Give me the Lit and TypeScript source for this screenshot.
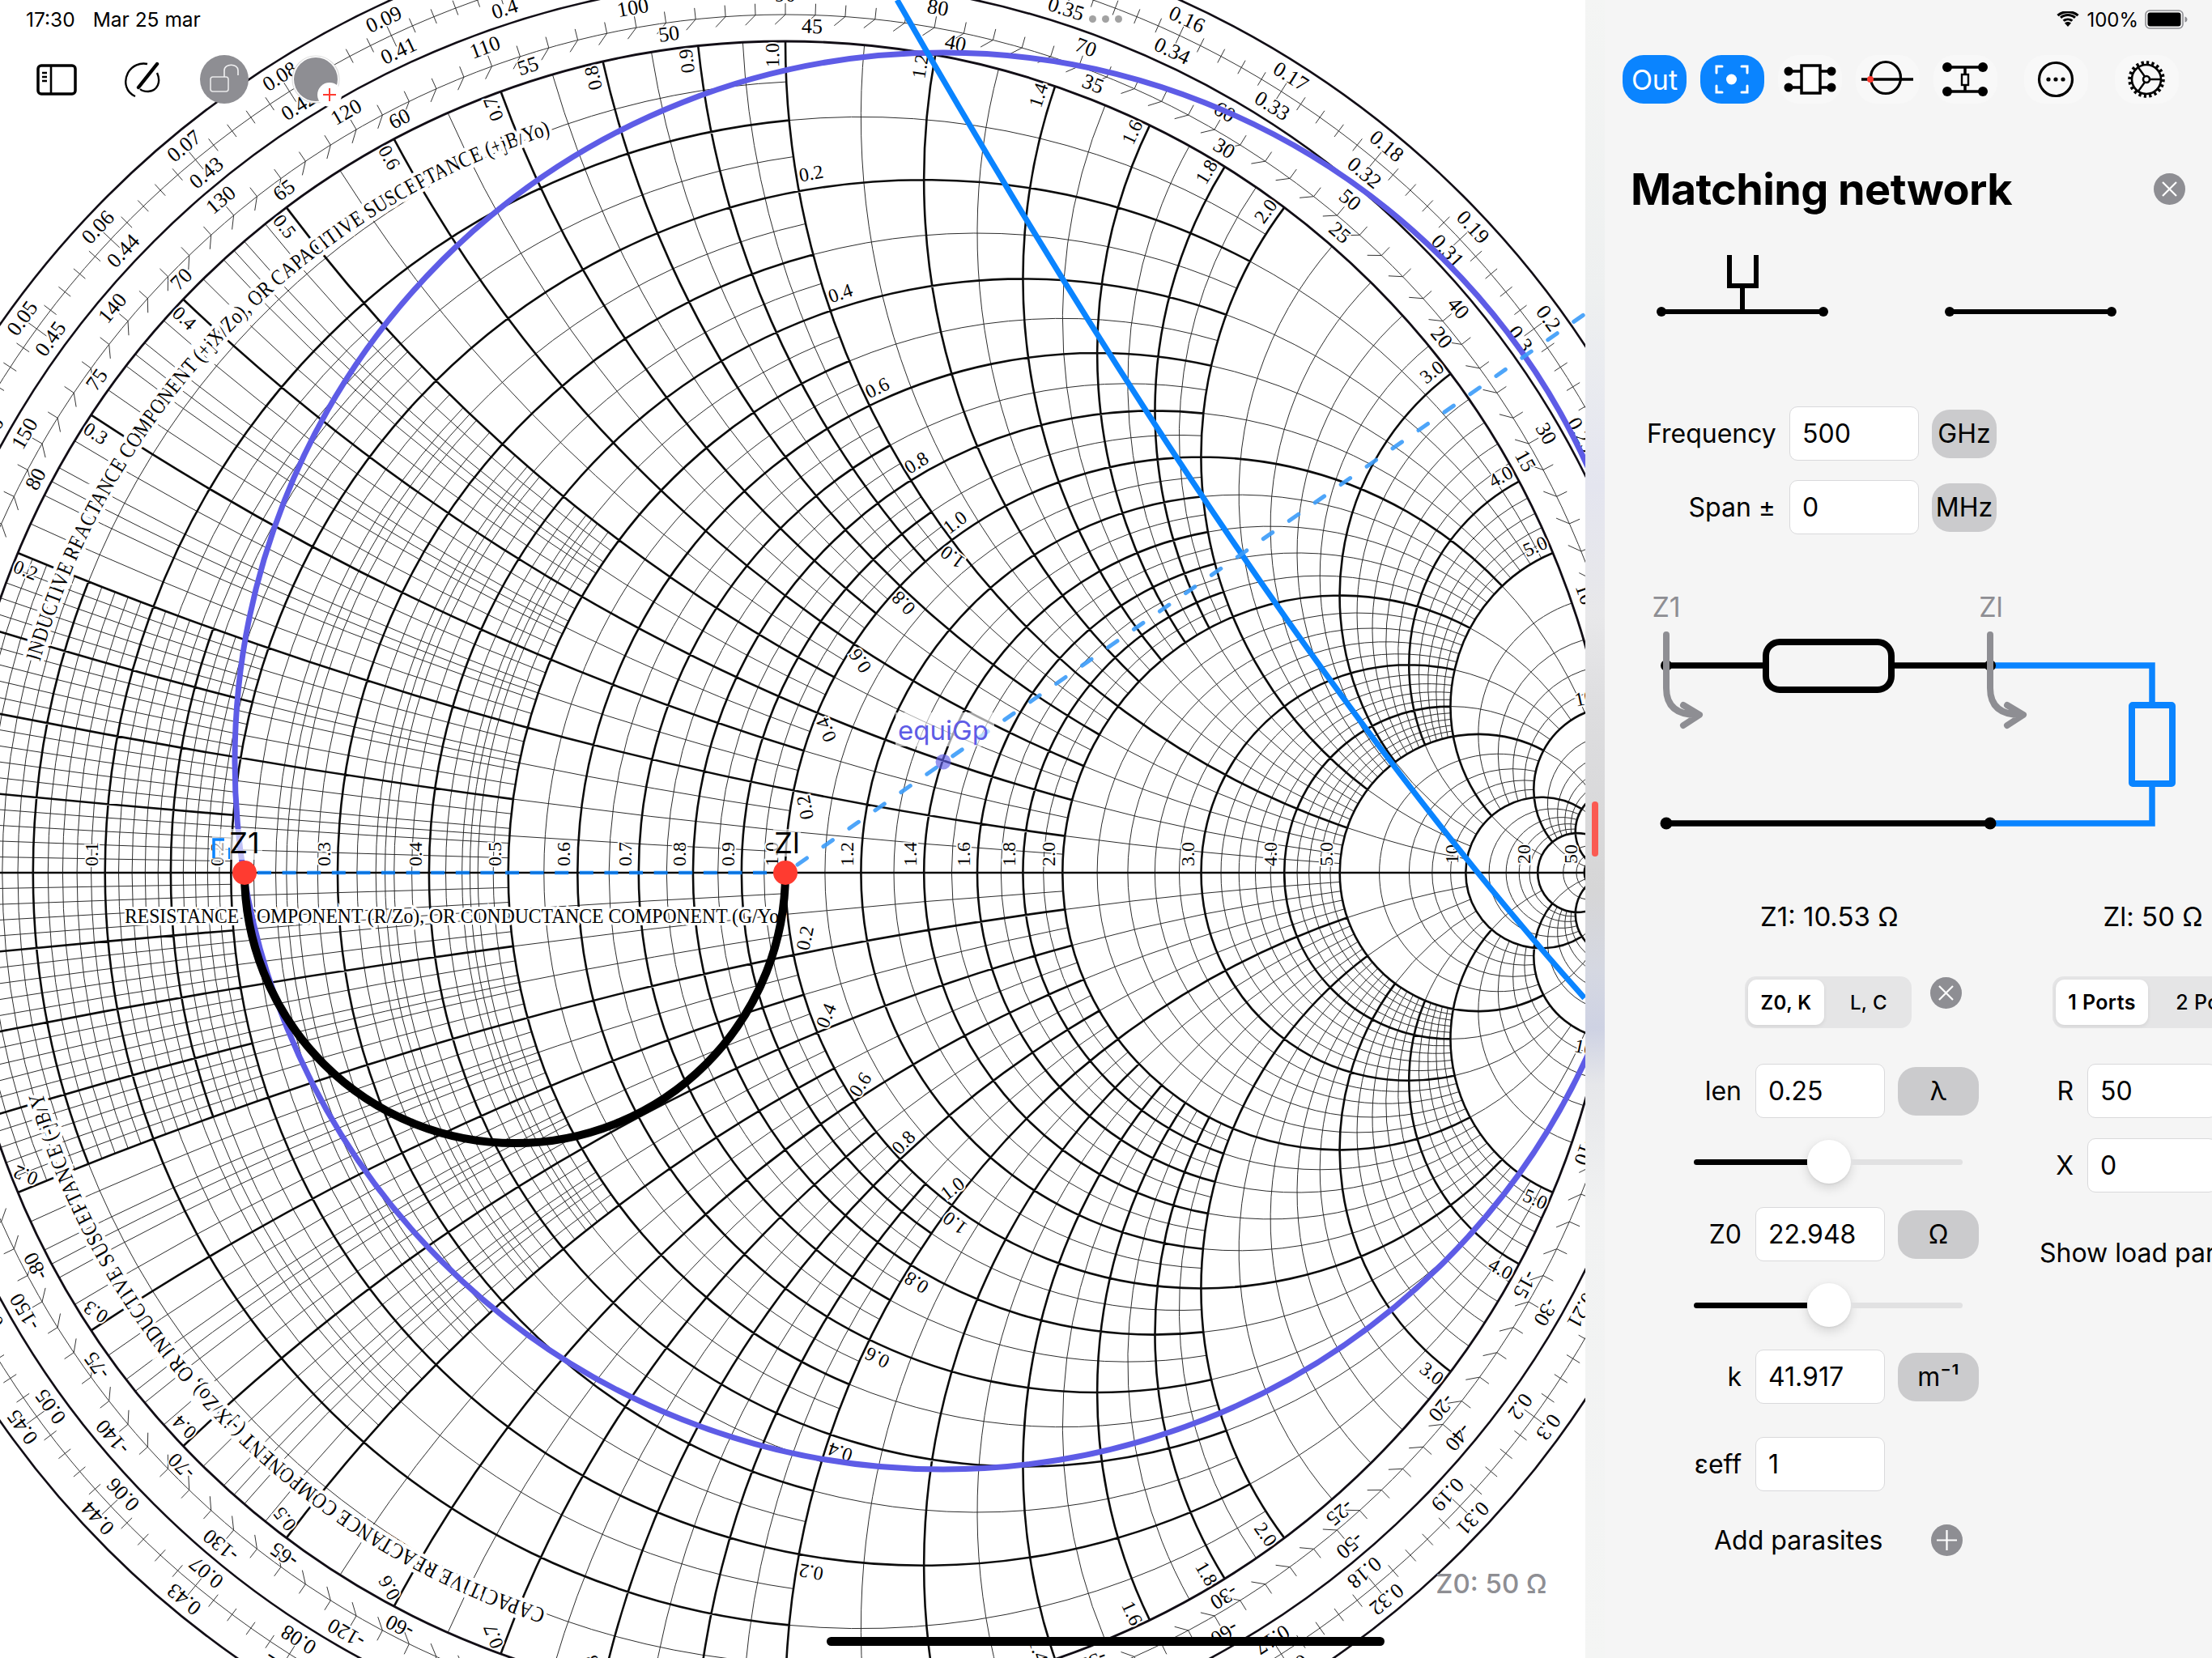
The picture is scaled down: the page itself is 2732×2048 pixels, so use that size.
import { css, html, LitElement, svg } from "lit";
import { customElement } from "lit/decorators.js";

// chart geometry, in page pixels
const CX = 970;
const CY = 1078;
const R = 1027;

const gamma = (r: number, x: number): [number, number] => {
  const d = (r + 1) * (r + 1) + x * x;
  return [CX + (R * (r * r + x * x - 1)) / d, CY - (R * 2 * x) / d];
};
const f = (n: number) => n.toFixed(1);

// [value, thick up to, thin up to, and the same two for the r line when it differs]
type GridLine = [number, number, number, number?, number?];
const grid: GridLine[] = [];
const add = (list: number[], t: number, m: number) => list.forEach((v) => grid.push([v, t, m]));
for (let i = 1; i < 20; i++) {
  if (i % 5) grid.push([i / 100, 0, i % 2 ? 0.2 : 0.5, 0, i < 10 ? 0.2 : i % 2 ? 0.2 : 0.5]);
}
add([0.05, 0.15], 0.2, 1);
grid.push([0.1, 0.5, 2, 1, 2]);
add([0.2], 2, 5);
add([0.22, 0.24, 0.26, 0.28, 0.32, 0.34, 0.36, 0.38, 0.42, 0.44, 0.46, 0.48], 0, 0.5);
add([0.25, 0.35, 0.45, 0.55, 0.65, 0.75, 0.85, 0.95], 0, 1);
add([0.3, 0.5, 0.7, 0.9], 1, 2);
add([0.4, 0.6, 0.8], 2, 5);
add([1], 5, 10);
add([1.1, 1.3, 1.5, 1.7, 1.9], 0, 2);
add([1.2, 1.4, 1.6, 1.8], 2, 5);
add([2, 3, 4], 5, 10);
add([2.2, 2.4, 2.6, 2.8, 3.2, 3.4, 3.6, 3.8, 4.2, 4.4, 4.6, 4.8], 0, 5);
add([5], 10, 20);
add([6, 7, 8, 9], 0, 10);
add([10], 20, 50);
add([12, 14, 16, 18], 0, 20);
add([20], 50, 100);
add([30, 40], 0, 50);
add([50], 100, 100);

const rArc = (r: number, a: number, b: number, s: number) => {
  const p = gamma(r, a * s);
  const q = gamma(r, b * s);
  const rad = R / (1 + r);
  return `M${f(p[0])} ${f(p[1])}A${f(rad)} ${f(rad)} 0 0 ${s > 0 ? 1 : 0} ${f(q[0])} ${f(q[1])}`;
};
const xArc = (x: number, a: number, b: number, s: number) => {
  const p = gamma(a, x * s);
  const q = gamma(b, x * s);
  const rad = R / x;
  return `M${f(p[0])} ${f(p[1])}A${f(rad)} ${f(rad)} 0 0 ${s > 0 ? 0 : 1} ${f(q[0])} ${f(q[1])}`;
};

let thinPath = "";
let thickPath = "";
for (const [v, t, m, rt, rm] of grid) {
  const tr = rt ?? t;
  const mr = rm ?? m;
  for (const s of [1, -1]) {
    if (tr > 0) thickPath += rArc(v, 0, tr, s);
    if (t > 0) thickPath += xArc(v, 0, t, s);
    if (mr > tr) thinPath += rArc(v, tr, mr, s);
    if (m > t) thinPath += xArc(v, t, m, s);
  }
}

// outer scale rings
const polar = (deg: number, rad: number): [number, number] => [
  CX + rad * Math.cos((deg * Math.PI) / 180),
  CY - rad * Math.sin((deg * Math.PI) / 180),
];
let tickPath = "";
for (let l = 0; l < 0.5; l += 0.002) {
  const a = 180 - l * 720;
  const big = Math.round(l * 1000) % 10 === 0;
  const p = polar(a, big ? 1128 : 1134);
  const q = polar(a, big ? 1158 : 1153);
  tickPath += `M${f(p[0])} ${f(p[1])}L${f(q[0])} ${f(q[1])}`;
}
for (let a = 0; a < 360; a += 2) {
  const p = polar(a, 1060);
  const q = polar(a, 1074);
  const u = polar(a + (a < 180 ? 0.7 : -0.7), 1048);
  tickPath += `M${f(p[0])} ${f(p[1])}L${f(q[0])} ${f(q[1])}M${f(p[0])} ${f(p[1])}L${f(u[0])} ${f(u[1])}`;
}

type Label = { x: number; y: number; rot: number; text: string; cls: string };
const labels: Label[] = [];
const onScreen = (x: number, y: number) => x > -30 && x < 1990 && y > -30 && y < 2080;
const ringLabel = (deg: number, rad: number, text: string) => {
  const [x, y] = polar(deg, rad);
  if (onScreen(x, y)) labels.push({ x, y, rot: 90 - deg, text, cls: "ring" });
};
const short = (n: number) => String(parseFloat(n.toFixed(2)));
for (let i = 1; i < 50; i++) {
  const l = i / 100;
  ringLabel(180 - l * 720, 1165, short(l));
  ringLabel(180 - (0.5 - l) * 720, 1122, short(l));
}
for (let a = 10; a < 180; a += 10) {
  ringLabel(a, 1085, String(a));
  ringLabel(-a, 1085, String(-a));
}
// the inner row drifts behind its tick as the angle grows (degrees, read off the chart)
const drift = [0.8, 0.8, 0.9, 0.8, 0.9, 1.2, 1.3, 1.6, 1.8, 2.1, 2.3, 2.9, 3.7, 4.5, 5.6, 7.7, 10];
drift.forEach((d, i) => {
  const t = (i + 1) * 5;
  ringLabel(2 * t - d, 1046, String(t));
  ringLabel(d - 2 * t, 1046, String(-t));
});
const num = (v: number) => (v >= 10 ? String(v) : v.toFixed(1));
// reactance values round the unit circle
for (const v of [0.2, 0.3, 0.4, 0.5, 0.6, 0.7, 0.8, 0.9, 1, 1.2, 1.4, 1.6, 1.8, 2, 3, 4, 5, 10, 20]) {
  const [px, py] = gamma(0, v);
  const deg = (Math.atan2(CY - py, px - CX) * 180) / Math.PI + 0.9;
  const up = polar(deg, 1010);
  const down = polar(-deg, 1010);
  const cos = Math.cos((deg * Math.PI) / 180);
  if (onScreen(up[0], up[1]))
    labels.push({ x: up[0], y: up[1], rot: cos < -0.4 ? 180 - deg : -deg, text: num(v), cls: "mid" });
  if (onScreen(down[0], down[1]))
    labels.push({ x: down[0], y: down[1], rot: cos < 0 ? -deg : deg, text: num(v), cls: "mid" });
}
// values along the r = 1 and x = 1 arcs
for (const v of [0.2, 0.4, 0.6, 0.8, 1]) {
  const d = (v - 0.2) / 0.8;
  const [ax, ay] = gamma(v, 1);
  const rc = CX + (R * v) / (1 + v);
  const tr = (Math.atan2(rc - ax, CY - ay) * -180) / Math.PI;
  const dx = 15 - 11 * d;
  labels.push({ x: ax + dx, y: ay - 22, rot: tr, text: num(v), cls: "mid" });
  labels.push({ x: ax + dx, y: 2 * CY - ay + 22, rot: 180 - tr, text: num(v), cls: "mid" });
  const [bx, by] = gamma(1, v);
  const cy = CY - R / v;
  const tx = (Math.atan2(bx - (CX + R), by - cy) * 180) / Math.PI + 90;
  const ex = 14 - 13 * d;
  labels.push({ x: bx + ex, y: by + 21, rot: 180 + tx, text: num(v), cls: "mid" });
  labels.push({ x: bx + ex, y: 2 * CY - by - 21, rot: -tx, text: num(v), cls: "mid" });
}
// resistance values on the axis
for (const v of [0.1, 0.2, 0.3, 0.4, 0.5, 0.6, 0.7, 0.8, 0.9, 1, 1.2, 1.4, 1.6, 1.8, 2, 3, 4, 5, 10, 20, 50]) {
  labels.push({ x: gamma(v, 0)[0] - 17, y: 1055, rot: -90, text: num(v), cls: "mid" });
}

const pol = (deg: number, rad: number) => polar(deg, rad).map(f).join(" ");
const upperArc = `M${pol(164.2, 957)}A957 957 0 0 1 ${pol(107.8, 957)}`;
const lowerArc = `M${pol(-108, 957)}A957 957 0 0 1 ${pol(-163.6, 957)}`;

const field = (label: string, value: string, unit?: unknown) => html`<div class="field">
  <span class="label">${label}</span>
  <input class="input" .value=${value} />
  ${unit ? html`<span class="unit">${unit}</span>` : ""}
</div>`;

const slider = html`<div class="slider">
  <span class="track-on"></span><span class="thumb"></span><span class="track-off"></span>
</div>`;

const circleIcon = (kind: "x" | "plus") => html`<svg class="circle-btn" viewBox="0 0 39 39">
  <circle cx="19.5" cy="19.5" r="19.5" fill="#8e8e93" />
  ${kind === "x"
    ? svg`<path d="M11 11L28 28M28 11L11 28" stroke="#fff" stroke-width="2.2" fill="none" />`
    : svg`<path d="M19.5 7V32M7 19.5H32" stroke="#fff" stroke-width="2.2" fill="none" />`}
</svg>`;

@customElement("app-root")
export class AppRoot extends LitElement {
  private renderChart() {
    return html`<svg class="smith" width="1958" height="2048" viewBox="0 0 1958 2048">
      <defs>
        <path id="upper" d=${upperArc}></path>
        <path id="lower" d=${lowerArc}></path>
      </defs>
      <path d=${thinPath} fill="none" stroke="#2c2c2c" stroke-width="1"></path>
      <path d=${thickPath} fill="none" stroke="#0c0c0c" stroke-width="2.6"></path>
      <path d=${tickPath} fill="none" stroke="#333" stroke-width="1"></path>
      <path d="M-60 ${CY}H1958" stroke="#0c0c0c" stroke-width="2.6"></path>
      <g fill="none" stroke="#120e16">
        <circle cx=${CX} cy=${CY} r=${R} stroke-width="2.8"></circle>
        <circle cx=${CX} cy=${CY} r="1060" stroke="#333" stroke-width="1"></circle>
        <circle cx=${CX} cy=${CY} r="1103" stroke-width="2.6"></circle>
        <circle cx=${CX} cy=${CY} r="1143" stroke="#333" stroke-width="1"></circle>
        <circle cx=${CX} cy=${CY} r="1183" stroke-width="2.6"></circle>
      </g>
      <text class="title">
        <textPath href="#upper" textLength="945" lengthAdjust="spacingAndGlyphs"
          >INDUCTIVE REACTANCE COMPONENT (+jX/Zo), OR CAPACITIVE SUSCEPTANCE (+jB/Yo)</textPath
        >
      </text>
      <text class="title">
        <textPath href="#lower" textLength="945" lengthAdjust="spacingAndGlyphs"
          >CAPACITIVE REACTANCE COMPONENT (-jX/Zo), OR INDUCTIVE SUSCEPTANCE (-jB/Yo)</textPath
        >
      </text>
      <text class="title axis" x="154" y="1140" textLength="816" lengthAdjust="spacingAndGlyphs"
        >RESISTANCE COMPONENT (R/Zo), OR CONDUCTANCE COMPONENT (G/Yo)</text
      >
      ${labels.map(
        (l) => svg`<text class=${l.cls} transform="translate(${f(l.x)} ${f(l.y)}) rotate(${f(l.rot)})">${l.text}</text>`,
      )}

      <circle class="purple" cx="1165" cy="940" r="875"></circle>
      <path class="blue" d="M1108 0Q1555.5 783.5 1957 1233"></path>
      <path class="dash" d="M985 1068L1960 386"></path>
      <path class="dash-h" d="M318 1078H955"></path>
      <path d="M302 1078A334 334 0 0 0 970 1078" fill="none" stroke="#000" stroke-width="10"></path>

      <rect class="veil" x="262" y="1024" width="62" height="38"></rect>
      <path d="M277 1037H264V1060" fill="none" stroke="#0a84ff" stroke-width="3.5"></path>
      <path d="M283 1047V1061" fill="none" stroke="#0a84ff" stroke-width="2"></path>
      <rect class="veil" x="955" y="1024" width="34" height="34"></rect>
      <text class="node" x="302" y="1054">Z1</text>
      <text class="node" x="972" y="1054">Zl</text>
      <circle cx="302" cy="1078" r="15" fill="#ff3b30"></circle>
      <circle cx="970" cy="1078" r="15" fill="#ff3b30"></circle>

      <rect class="veil" x="1106" y="880" width="122" height="42"></rect>
      <text class="equi" x="1165" y="914">equiGp</text>
      <circle cx="1165" cy="941" r="9.5" fill="#5e5ce6" opacity="0.65"></circle>

      <text class="z0" x="1842" y="1968">Z0: 50 Ω</text>
    </svg>`;
  }

  private renderStatusLeft() {
    return html`<div class="status-left"><span>17:30</span><span>Mar 25 mar</span></div>
      <div class="tools">
        <svg class="tool-a" viewBox="0 0 50 40">
          <rect x="2" y="2" width="46" height="35" rx="4" fill="none" stroke="#000" stroke-width="3.5" />
          <path d="M18 2V37M7 11H13M7 16H13M7 21H13" fill="none" stroke="#000" stroke-width="2.6" />
        </svg>
        <svg class="tool-b" viewBox="0 0 46 46">
          <path
            d="M14 43C3 38 -1 26 5 14C10 5 20 1 29 3M41 14C46 25 42 36 30 37C26 37 22 36 20 34"
            fill="none"
            stroke="#000"
            stroke-width="2.4"
          />
          <path d="M41 3L18 32" fill="none" stroke="#000" stroke-width="4.4" stroke-linecap="round" />
        </svg>
        <svg class="tool-c" viewBox="0 0 60 60">
          <circle cx="30" cy="30" r="30" fill="#8e8e93" />
          <rect x="13" y="27" width="22" height="18" rx="3" fill="none" stroke="#e9e9ea" stroke-width="1.6" />
          <path d="M30 27V19C30 10 47 10 47 19V25" fill="none" stroke="#f2f2f3" stroke-width="1.6" />
        </svg>
        <svg class="tool-d" viewBox="0 0 76 66">
          <circle cx="30" cy="30" r="29" fill="#fff" stroke="#dedede" stroke-width="1.2" />
          <circle cx="30" cy="30" r="27" fill="#8e8e93" />
          <circle cx="47" cy="49" r="15" fill="#fff" />
          <path d="M47 41V57M39 49H55" stroke="#ff3b30" stroke-width="2" fill="none" />
        </svg>
      </div>`;
  }

  private renderToolbar() {
    return html`<div class="toolbar">
      <button class="tb on out">Out</button>
      <button class="tb on">
        <svg viewBox="0 0 78 60">
          <path
            d="M27 16H20V24M51 16H58V24M27 48H20V40M51 48H58V40"
            transform="translate(0 -2)"
            fill="none"
            stroke="#fff"
            stroke-width="3"
            stroke-linecap="round"
          />
          <circle cx="38.5" cy="30" r="6.5" fill="#fff" />
        </svg>
      </button>
      <button class="tb">
        <svg viewBox="0 0 78 60">
          <path d="M13 20H67M13 40H67" stroke="#000" stroke-width="3.5" fill="none" />
          <rect x="29" y="13" width="23" height="34" fill="#fff" stroke="#000" stroke-width="3.5" />
          <g><circle cx="13" cy="20" r="5.5" /><circle cx="13" cy="40" r="5.5" /><circle cx="66" cy="20" r="5.5" /><circle cx="66" cy="40" r="5.5" /></g>
        </svg>
      </button>
      <button class="tb">
        <svg viewBox="0 0 78 60">
          <ellipse cx="37" cy="28" rx="18.5" ry="19.5" fill="none" stroke="#000" stroke-width="3.2" />
          <path d="M7 30H71" stroke="#000" stroke-width="3.5" />
          <circle cx="18" cy="30" r="4" fill="#ff3b30" />
        </svg>
      </button>
      <button class="tb">
        <svg viewBox="0 0 78 60">
          <path d="M17 15H61M17 45H61M39 15V24M39 37V45" stroke="#000" stroke-width="3.5" fill="none" />
          <rect x="35" y="24" width="8" height="13" fill="none" stroke="#000" stroke-width="2.4" />
          <g><circle cx="17" cy="15" r="6" /><circle cx="61" cy="15" r="6" /><circle cx="17" cy="45" r="6" /><circle cx="61" cy="45" r="6" /></g>
        </svg>
      </button>
      <button class="tb more">
        <svg viewBox="0 0 78 60">
          <circle cx="39" cy="30" r="20.5" fill="none" stroke="#000" stroke-width="3.2" />
          <g><circle cx="30" cy="30" r="2.6" /><circle cx="39" cy="30" r="2.6" /><circle cx="48" cy="30" r="2.6" /></g>
        </svg>
      </button>
      <button class="tb gear">
        <svg viewBox="0 0 78 60">
          <circle cx="39" cy="30" r="20.5" fill="none" stroke="#000" stroke-width="4.5" stroke-dasharray="3.2 3.2" />
          <circle cx="39" cy="30" r="18" fill="none" stroke="#000" stroke-width="2.6" />
          <circle cx="39" cy="30" r="4" fill="none" stroke="#000" stroke-width="2.6" />
          <path d="M43 30H57M37 26.5L28 14M37 33.5L28 46" stroke="#000" stroke-width="2.4" fill="none" />
        </svg>
      </button>
    </div>`;
  }

  private renderCircuit() {
    return html`<svg class="circuit" viewBox="2032 730 668 300" width="668" height="300">
      <text class="zt" x="2058" y="762">Z1</text>
      <text class="zt" x="2459" y="762">Zl</text>
      <path d="M2458 822H2658V871M2658 972V1017H2458" fill="none" stroke="#0a84ff" stroke-width="7.5" />
      <rect x="2633" y="871" width="50" height="97" fill="none" stroke="#0a84ff" stroke-width="8" rx="1" />
      <path d="M2058 822H2181M2336 822H2458M2058 1017H2458" fill="none" stroke="#000" stroke-width="7.5" />
      <rect x="2181" y="793" width="155" height="59" rx="17" fill="none" stroke="#000" stroke-width="8" />
      <circle cx="2058" cy="822" r="7" />
      <circle cx="2458" cy="822" r="7" />
      <circle cx="2058" cy="1017" r="7.5" />
      <circle cx="2458" cy="1017" r="7.5" />
      <g fill="none" stroke="#8e8e93" stroke-width="8" stroke-linecap="round" stroke-linejoin="round">
        <path d="M2058 784V850Q2058 883 2096 883M2079 871L2099 883L2079 896" />
        <path d="M2458 784V850Q2458 883 2496 883M2479 871L2499 883L2479 896" />
      </g>
    </svg>`;
  }

  render() {
    return html`<div class="screen">
      <div class="chart">
        ${this.renderChart()} ${this.renderStatusLeft()}
        <div class="dots"><i></i><i></i><i></i></div>
        <div class="home"></div>
      </div>
      <div class="panel">
        <div class="strip"><span class="grip"></span></div>
        <div class="main">
          <div class="status-right">
            <svg class="wifi" viewBox="0 0 30 20">
              <path d="M15 19L11 14.6C13.4 12.6 16.6 12.6 19 14.6Z" />
              <path d="M8.6 12C12.3 8.8 17.7 8.8 21.4 12L19.3 14C16.6 11.9 13.4 11.9 10.7 14Z" transform="translate(0 -1.2)" />
              <path d="M5 8.3C10.7 3.4 19.3 3.4 25 8.3L22.8 10.5C18.2 6.7 11.8 6.7 7.2 10.5Z" transform="translate(0 -1.6)" />
              <path d="M1.4 4.6C9.2 -2 20.8 -2 28.6 4.6L26.4 6.8C20 1.4 10 1.4 3.6 6.8Z" transform="translate(0 -.6)" />
            </svg>
            <span class="pct">100%</span>
            <svg class="battery" viewBox="0 0 53 24">
              <rect x="1" y="1" width="46" height="22" rx="5" fill="none" stroke="#8e8e93" stroke-width="1.6" />
              <rect x="3.5" y="3.5" width="41" height="17" rx="3" fill="#000" />
              <path d="M49.5 8.5C51.5 9 52.5 10.5 52.5 12S51.5 15 49.5 15.5Z" fill="#8e8e93" />
            </svg>
          </div>
          ${this.renderToolbar()}
          <div class="head">
            <span class="h1">Matching network</span>
            ${circleIcon("x")}
          </div>
          <svg class="pick" viewBox="2040 310 580 85" width="580" height="85">
            <path d="M2052 385H2252M2152 385V353M2136 315V353H2169V315M2408 385H2608" fill="none" stroke="#000" stroke-width="6" />
            <circle cx="2052" cy="385" r="6" /><circle cx="2252" cy="385" r="6" />
            <circle cx="2408" cy="385" r="6" /><circle cx="2608" cy="385" r="6" />
          </svg>
          <div class="freq">
            <div class="field">
              <span class="label">Frequency</span><input class="input" .value=${"500"} /><span class="unit">GHz</span>
            </div>
            <div class="field">
              <span class="label">Span ±</span><input class="input" .value=${"0"} /><span class="unit">MHz</span>
            </div>
          </div>
          ${this.renderCircuit()}
          <div class="read"><span>Z1: 10.53 Ω</span><span>Zl: 50 Ω</span></div>
          <div class="cols">
            <div class="col left">
              <div class="seg-row">
                <div class="seg">
                  <span class="opt sel">Z0, K</span><span class="opt">L, C</span>
                </div>
                ${circleIcon("x")}
              </div>
              ${field("len", "0.25", "λ")} ${slider} ${field("Z0", "22.948", "Ω")} ${slider}
              ${field("k", "41.917", "m⁻¹")} ${field("εeff", "1")}
              <div class="add"><span>Add parasites</span>${circleIcon("plus")}</div>
            </div>
            <div class="col right">
              <div class="seg-row">
                <div class="seg wide">
                  <span class="opt sel">1 Ports</span><span class="opt">2 Ports</span>
                </div>
              </div>
              ${field("R", "50")} ${field("X", "0")}
              <div class="show">Show load parameters</div>
            </div>
          </div>
        </div>
      </div>
    </div>`;
  }

  static styles = css`
    :host {
      display: block;
      width: 2732px;
      height: 2048px;
      overflow: hidden;
      background: #fff;
      font-family: Inter, "Noto Sans", sans-serif;
      color: #000;
    }
    .screen {
      display: flex;
      height: 2048px;
    }
    .chart {
      position: relative;
      flex: none;
      width: 1958px;
      height: 2048px;
      overflow: hidden;
    }
    .smith {
      display: block;
    }
    .smith text {
      font-family: "Liberation Serif", serif;
      fill: #000;
      text-anchor: middle;
      dominant-baseline: central;
    }
    .smith .ring {
      font-size: 26px;
      paint-order: stroke;
      stroke: #fff;
      stroke-width: 3px;
    }
    .smith .mid {
      font-size: 24px;
      paint-order: stroke;
      stroke: #fff;
      stroke-width: 4px;
    }
    .smith .title {
      font-size: 27px;
      text-anchor: start;
      dominant-baseline: auto;
      paint-order: stroke;
      stroke: #fff;
      stroke-width: 9px;
    }
    .smith .axis {
      font-size: 25px;
      stroke-width: 6px;
    }
    .purple {
      fill: none;
      stroke: #5e5ce6;
      stroke-width: 7px;
    }
    .blue {
      fill: none;
      stroke: #0a84ff;
      stroke-width: 7px;
    }
    .dash {
      fill: none;
      stroke: #3b9bf8;
      stroke-width: 5px;
      stroke-dasharray: 14 25;
      stroke-linecap: round;
      opacity: 0.9;
    }
    .dash-h {
      fill: none;
      stroke: #0a84ff;
      stroke-width: 4.5px;
      stroke-dasharray: 17 13.6;
      opacity: 0.85;
    }
    .veil {
      fill: #fff;
      opacity: 0.62;
    }
    .smith .node {
      font-family: Inter, sans-serif;
      font-size: 36px;
      dominant-baseline: auto;
    }
    .smith .equi {
      font-family: Inter, sans-serif;
      font-size: 33px;
      fill: #5e5ce6;
      dominant-baseline: auto;
    }
    .smith .z0 {
      font-family: Inter, sans-serif;
      font-size: 33px;
      font-weight: 500;
      fill: #8e8e93;
      dominant-baseline: auto;
    }
    .status-left {
      position: absolute;
      left: 32px;
      top: 9px;
      display: flex;
      gap: 22px;
      font-size: 24.5px;
      line-height: 30px;
    }
    .tools {
      position: absolute;
      left: 45px;
      top: 68px;
      display: flex;
      align-items: flex-start;
    }
    .tool-a {
      width: 50px;
      height: 40px;
      margin-top: 11px;
    }
    .tool-b {
      width: 46px;
      height: 46px;
      margin: 8px 0 0 58px;
    }
    .tool-c {
      width: 60px;
      height: 60px;
      margin: 0 0 0 48px;
    }
    .tool-d {
      width: 76px;
      height: 66px;
      margin: 0 0 0 53px;
      overflow: visible;
    }
    .dots {
      position: absolute;
      left: 1345px;
      top: 19px;
      display: flex;
      gap: 7px;
    }
    .dots i {
      width: 9px;
      height: 9px;
      border-radius: 50%;
      background: #a2a2a2;
    }
    .home {
      position: absolute;
      left: 1021px;
      top: 2022px;
      width: 689px;
      height: 11px;
      border-radius: 6px;
      background: #000;
    }
    .panel {
      flex: none;
      width: 774px;
      height: 2048px;
      display: flex;
      overflow: hidden;
    }
    .strip {
      flex: none;
      width: 24px;
      height: 2048px;
      background: linear-gradient(
        180deg,
        #f4f5f4 0,
        #eef0f0 360px,
        #e4e5ef 600px,
        #e8e8ea 760px,
        #dddddf 880px,
        #d6d6d7 1100px,
        #d5d8e2 1200px,
        #ced2e3 1270px,
        #e6e7ea 1340px,
        #f1f2f2 1500px,
        #f4f5f4 2048px
      );
    }
    .grip {
      display: block;
      width: 8px;
      height: 68px;
      margin: 990px 0 0 8px;
      border-radius: 4px;
      background: #fa5a52;
    }
    .main {
      flex: none;
      width: 750px;
      height: 2048px;
      background: #f5f5f5;
      display: flex;
      flex-direction: column;
    }
    .status-right {
      height: 48px;
      display: flex;
      justify-content: flex-end;
      align-items: center;
      padding-right: 30px;
    }
    .wifi {
      width: 30px;
      height: 20px;
    }
    .pct {
      margin-left: 8px;
      font-size: 24px;
    }
    .battery {
      width: 53px;
      height: 24px;
      margin-left: 8px;
    }
    .toolbar {
      margin-top: 20px;
      padding-left: 22px;
      display: flex;
      gap: 17px;
    }
    .tb {
      flex: none;
      width: 79px;
      height: 60px;
      padding: 0;
      border: none;
      border-radius: 26px;
      background: #f8f8f8;
      font: inherit;
    }
    .tb svg {
      display: block;
      width: 78px;
      height: 60px;
    }
    .tb.on {
      background: #0a84ff;
      color: #fff;
    }
    .out {
      font-size: 34px;
    }
    .more {
      margin-left: 16px;
    }
    .gear {
      margin-left: 16px;
    }
    .head {
      margin-top: 75px;
      height: 60px;
      padding: 0 33px 0 32px;
      display: flex;
      justify-content: space-between;
      align-items: center;
    }
    .h1 {
      font-size: 54px;
      font-weight: 700;
      letter-spacing: -0.6px;
      white-space: nowrap;
    }
    .circle-btn {
      flex: none;
      width: 39px;
      height: 39px;
    }
    .pick {
      display: block;
      margin: 47px 0 0 58px;
    }
    .freq {
      margin: 107px 0 0 52px;
      display: flex;
      flex-direction: column;
      gap: 24px;
    }
    .field {
      display: flex;
      align-items: center;
    }
    .label {
      flex: none;
      text-align: right;
      font-size: 32px;
      white-space: nowrap;
    }
    .input {
      flex: none;
      box-sizing: border-box;
      width: 160px;
      height: 67px;
      padding: 0 15px;
      border: 1.5px solid #d9d9db;
      border-radius: 10px;
      background: #fff;
      font: inherit;
      font-size: 32px;
      color: #000;
      outline: none;
    }
    .unit {
      flex: none;
      margin-left: 16px;
      height: 60px;
      border-radius: 22px;
      background: #cbcbcd;
      display: flex;
      align-items: center;
      justify-content: center;
      font-size: 32px;
    }
    .freq .label {
      width: 159px;
      margin-right: 17px;
    }
    .freq .unit {
      width: 80px;
    }
    .circuit {
      display: block;
      margin: 70px 0 0 50px;
      overflow: visible;
    }
    .zt {
      font-size: 34px;
      fill: #8e8e93;
      text-anchor: middle;
    }
    .read {
      margin-top: 82px;
      height: 40px;
      padding-left: 192px;
      display: flex;
      align-items: center;
      gap: 253px;
      font-size: 33px;
      white-space: nowrap;
    }
    .cols {
      margin-top: 54px;
      display: flex;
    }
    .col {
      flex: none;
      width: 537px;
      display: flex;
      flex-direction: column;
    }
    .col.right {
      width: 213px;
    }
    .seg-row {
      height: 64px;
      display: flex;
      align-items: flex-start;
      margin-left: 173px;
    }
    .col.right .seg-row {
      margin-left: 16px;
    }
    .seg-row .circle-btn {
      margin: 1px 0 0 23px;
    }
    .seg {
      flex: none;
      box-sizing: border-box;
      width: 206px;
      height: 64px;
      padding: 4px;
      border-radius: 14px;
      background: #e5e5e6;
      display: flex;
      font-size: 24px;
      font-weight: 500;
    }
    .seg.wide {
      width: 272px;
      font-size: 25px;
    }
    .opt {
      flex: none;
      box-sizing: border-box;
      width: 94px;
      height: 56px;
      border-radius: 11px;
      display: flex;
      align-items: center;
      justify-content: center;
      white-space: nowrap;
      letter-spacing: 0.4px;
    }
    .opt.sel {
      background: #fff;
      font-weight: 600;
      box-shadow: 0 2px 5px rgba(0, 0, 0, 0.08);
    }
    .opt:not(.sel) {
      width: 104px;
      padding-left: 6px;
    }
    .seg.wide .opt {
      width: 114px;
    }
    .seg.wide .opt:not(.sel) {
      width: 150px;
    }
    .col.left .field {
      margin-top: 28px;
    }
    .col.left .seg-row + .field {
      margin-top: 44px;
    }
    .col.left .field + .field {
      margin-top: 41px;
    }
    .col.left .slider + .field {
      margin-top: 29px;
    }
    .col.left .slider + .field ~ .slider + .field {
      margin-top: 28px;
    }
    .col.left .label {
      width: 169px;
      margin-right: 17px;
    }
    .col.left .unit {
      width: 100px;
    }
    .col.right .field {
      margin-top: 44px;
    }
    .col.right .field + .field {
      margin-top: 25px;
    }
    .col.right .label {
      width: 42px;
      margin-right: 17px;
    }
    .slider {
      margin: 27px 0 0 110px;
      width: 332px;
      height: 54px;
      display: flex;
      align-items: center;
    }
    .track-on {
      flex: none;
      width: 140px;
      height: 7px;
      border-radius: 4px 0 0 4px;
      background: #000;
    }
    .track-off {
      flex: 1;
      height: 7px;
      border-radius: 0 4px 4px 0;
      background: #e1e1e2;
    }
    .thumb {
      flex: none;
      width: 54px;
      height: 54px;
      border-radius: 50%;
      background: #fff;
      box-shadow: 0 5px 14px rgba(0, 0, 0, 0.14), 0 1px 3px rgba(0, 0, 0, 0.08);
    }
    .add {
      margin: 40px 0 0 135px;
      height: 40px;
      width: 307px;
      display: flex;
      justify-content: space-between;
      align-items: center;
      font-size: 32px;
      white-space: nowrap;
    }
    .show {
      margin-top: 55px;
      height: 40px;
      line-height: 40px;
      font-size: 32px;
      white-space: nowrap;
    }
    svg text {
      font-family: Inter, sans-serif;
    }
  `;
}

declare global {
  interface HTMLElementTagNameMap {
    "app-root": AppRoot;
  }
}
